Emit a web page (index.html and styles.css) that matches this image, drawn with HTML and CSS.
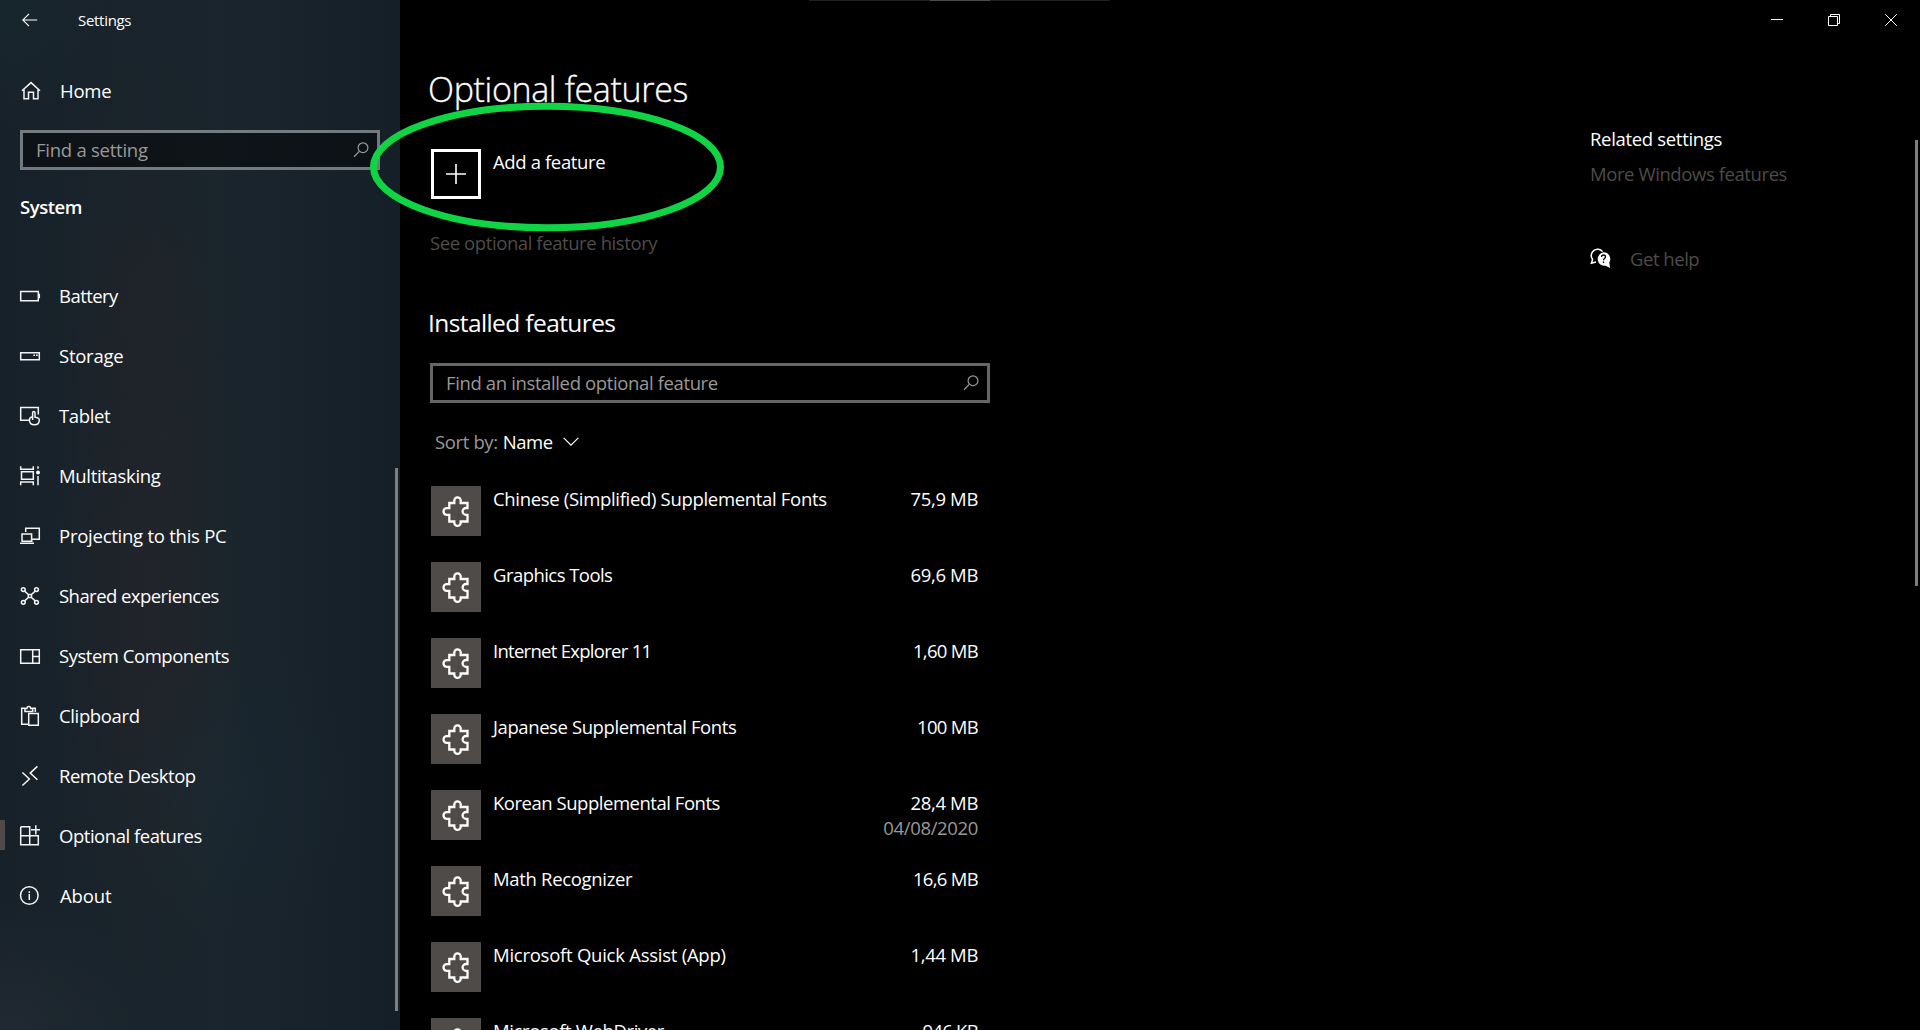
FILE: index.html
```
<!DOCTYPE html>
<html lang="en">
<head>
<meta charset="utf-8">
<title>Settings</title>
<link rel="stylesheet" href="styles.css">
</head>
<body>
<svg class="defs" width="0" height="0" aria-hidden="true">
  <symbol id="puzzle" viewBox="0 0 50 50"><path d="M18.3 17h5v-2.500a3.200 3.200 0 0 1 6.400 0V17H36.500v5h-1.500a3.400 3.400 0 0 0 0 6.800h1.500v6.700h-6.800v1.200a3.200 3.200 0 0 1-6.400 0v-1.200H18.300v-6.700h-2.500a3.300 3.300 0 0 1 0-6.600H18.300z" fill="none" stroke="#fff" stroke-width="2.300"/></symbol>
  <symbol id="magnifier" viewBox="0 0 16 16"><path d="M6.300 9.400 1 14.700" fill="none" stroke="currentColor" stroke-width="1.300"/><circle cx="10" cy="5.700" r="4.900" fill="none" stroke="currentColor" stroke-width="1.200"/></symbol>
</svg>
<div class="window">
  <aside class="sidebar">
    <header class="titlebar">
      <svg class="back" width="16" height="14" viewBox="0 0 16 14"><path d="M15.2 7H1M7 .8.8 7 7 13.2"/></svg>
      <span class="app-name">Settings</span>
    </header>
    <a class="nav-item home"><svg class="icon" viewBox="0 0 20 20"><path d="M2 9.8 11 1.600l9 8.200M4 8.500v9.200h4.500v-6.500h5v6.500H18V8.500"/></svg><span class="tr-25">Home</span></a>
    <div class="search side-search"><span class="tr-25">Find a setting</span><svg class="magnifier"><use href="#magnifier"/></svg></div>
    <h2 class="section tr-45">System</h2>
    <nav class="nav">
      <a class="nav-item"><svg class="icon" viewBox="0 0 20 20"><path d="M.7 5.500h17.600v9.200H.7zM19.300 7.800v4.400"/></svg><span class="tr-55">Battery</span></a>
      <a class="nav-item"><svg class="icon" viewBox="0 0 20 20"><path d="M.7 6.700h18.600v7H.7zM13.300 9.300h1.700M16 9.300h1.700"/></svg><span class="tr-25">Storage</span></a>
      <a class="nav-item"><svg class="icon" viewBox="0 0 20 20"><path d="M9 14.200H.7V1.500h17.600v7M12.600 14V6.900q0-1.400 1.200-1.400T15 6.900v4.300l2.300.5q2 .4 2 2.300 0 4.800-4.700 4.800-5.200 0-5.200-4.800 0-2.800 3.200-3.200"/></svg><span class="tr-35">Tablet</span></a>
      <a class="nav-item"><svg class="icon" viewBox="0 0 20 20"><path d="M.7.2v3h12.600v-3M.7 19.200V16h12.600v3.200M1.500 5.800h11.800v7.400H1.500zM18 .2v2.600M18 10v9.200"/><circle class="solid" cx="18" cy="6.600" r="2"/></svg><span class="tr-30">Multitasking</span></a>
      <a class="nav-item"><svg class="icon" viewBox="0 0 20 20"><path d="M5.700 6V2.300h13.600v11H12M2 15V8h9.600v7M0 17.300h14M1.400 15.200h11.200"/></svg><span class="tr-25">Projecting to this PC</span></a>
      <a class="nav-item"><svg class="icon" viewBox="0 0 20 20"><path d="m4.600 5.100 4 3.600m6.600-3.600-4 3.600m-6.600 6.200 4-3.600m6.600 3.600-4-3.600M8.300 8.500h3.200v3H8.300z"/><circle cx="3.300" cy="3.600" r="1.900"/><circle cx="16.500" cy="3.600" r="1.900"/><circle cx="3.300" cy="16.300" r="1.900"/><circle cx="16.500" cy="16.300" r="1.900"/></svg><span class="tr-55">Shared experiences</span></a>
      <a class="nav-item"><svg class="icon" viewBox="0 0 20 20"><path d="M.7 3.700h18.600v13.600H.7zM12.700 3.700v13.600M12.700 10.500h6.600"/></svg><span class="tr-45">System Components</span></a>
      <a class="nav-item"><svg class="icon" viewBox="0 0 20 20"><path d="M8 18.300H1.700V2.200h3.800M11.800 2.200h3.500V6M4.900 5.500V2.600h2q0-2 1.900-2t1.900 2h2v2.900zM8.700 7.600h9.600v11.700H8.700z"/></svg><span class="tr-35">Clipboard</span></a>
      <a class="nav-item"><svg class="icon" viewBox="0 0 20 20"><path d="m2.400 6.500 7 6.500-7 6.500M17.400.4l-7.200 6.700 7.200 6.700"/></svg><span class="tr-45">Remote Desktop</span></a>
      <a class="nav-item selected"><svg class="icon" viewBox="0 0 20 20"><path d="M.7.7h9v18M.7.7v18h17.600V9.800H.7M15.800-.8v9.400M11 3.800h9"/></svg><span class="tr-45">Optional features</span></a>
      <a class="nav-item about"><svg class="icon" viewBox="0 0 20 20"><circle cx="9.300" cy="9.500" r="8.800"/><path d="M9.300 8v6M9.300 5.200v1.700"/></svg><span class="tr-15">About</span></a>
    </nav>
    <div class="scrollbar side-scroll"></div>
  </aside>
  <main class="content">
    <h1 class="page-title">Optional features</h1>
    <div class="add-row">
      <div class="add-box"><svg width="20" height="20" viewBox="0 0 20 20"><path d="M10 0v20M0 10h20" stroke="#fff" stroke-width="1.600"/></svg></div>
      <span class="tr-35">Add a feature</span>
    </div>
    <a class="history tr-40">See optional feature history</a>
    <h2 class="subtitle">Installed features</h2>
    <div class="search main-search"><span class="tr-35">Find an installed optional feature</span><svg class="magnifier"><use href="#magnifier"/></svg></div>
    <div class="sort"><span class="label tr-35">Sort by:</span><span class="tr-45">Name</span><svg width="16" height="9" viewBox="0 0 16 9"><path d="m.7.8 7.300 7.300L15.300.8" fill="none" stroke="#fff" stroke-width="1.200"/></svg></div>
    <ul class="features">
      <li><svg class="tile"><use href="#puzzle"/></svg><span class="name tr-30">Chinese (Simplified) Supplemental Fonts</span><span class="size">75,9 MB</span></li>
      <li><svg class="tile"><use href="#puzzle"/></svg><span class="name tr-55">Graphics Tools</span><span class="size">69,6 MB</span></li>
      <li><svg class="tile"><use href="#puzzle"/></svg><span class="name tr-70">Internet Explorer 11</span><span class="size narrow">1,60 MB</span></li>
      <li><svg class="tile"><use href="#puzzle"/></svg><span class="name tr-40">Japanese Supplemental Fonts</span><span class="size narrow">100 MB</span></li>
      <li><svg class="tile"><use href="#puzzle"/></svg><span class="name tr-45">Korean Supplemental Fonts</span><span class="size">28,4 MB<br><span class="date">04/08/2020</span></span></li>
      <li><svg class="tile"><use href="#puzzle"/></svg><span class="name tr-30">Math Recognizer</span><span class="size narrow">16,6 MB</span></li>
      <li><svg class="tile"><use href="#puzzle"/></svg><span class="name tr-25">Microsoft Quick Assist (App)</span><span class="size">1,44 MB</span></li>
      <li><svg class="tile"><use href="#puzzle"/></svg><span class="name tr-35">Microsoft WebDriver</span><span class="size narrow">946 KB</span></li>
    </ul>
  </main>
  <aside class="related">
    <div class="controls">
      <svg width="12" height="12" viewBox="0 0 12 12"><path d="M0 5.500h12"/></svg>
      <svg width="12" height="12" viewBox="0 0 12 12"><path d="M.5 2.500h9v9h-9zM2.500 2.500v-2h9v9h-2"/></svg>
      <svg width="12" height="12" viewBox="0 0 12 12"><path d="m.2.2 11.600 11.600M11.800.2.2 11.800"/></svg>
    </div>
    <h3 class="related-title tr-30">Related settings</h3>
    <a class="link tr-40">More Windows features</a>
    <a class="link help"><svg width="21" height="21" viewBox="0 0 21 21"><path d="M12.600 3.600A6.300 6.300 0 1 0 2.600 11.500L1.400 15.200 6 14" fill="none" stroke="#fff" stroke-width="1.500"/><path d="M13.500 4.200a6.800 6.800 0 0 1 5.800 10.300l.8 5.400-4.600-2.200A6.800 6.800 0 1 1 13.500 4.200z" fill="#fff"/><path d="M11.500 9q0-2 2-2t2 1.800q0 1-1 1.700-.9.700-.9 1.700M13.500 13.500v1.400" fill="none" stroke="#000" stroke-width="1.300"/></svg><span class="tr-45">Get help</span></a>
    <div class="scrollbar main-scroll"></div>
  </aside>
  <div class="top-grip"><i></i></div>
  <svg class="highlight" width="354" height="129" viewBox="0 0 354 129"><ellipse cx="177" cy="65" rx="173.500" ry="60.800"/></svg>
</div>
</body>
</html>
```

FILE: styles.css
```
* { box-sizing: border-box; }
body {
  margin: 0;
  overflow: hidden;
  background: #000;
  color: #fff;
  font: 18.5px/25px "Open Sans", "Noto Sans", sans-serif;
}
h1, h2, h3, ul { margin: 0; padding: 0; font-weight: 400; }
svg { display: block; flex: none; overflow: visible; }
.defs { position: absolute; }
.tr-15 { letter-spacing: -0.15px; }
.tr-25 { letter-spacing: -0.25px; }
.tr-30 { letter-spacing: -0.32px; }
.tr-35 { letter-spacing: -0.37px; }
.tr-40 { letter-spacing: -0.41px; }
.tr-45 { letter-spacing: -0.47px; }
.tr-55 { letter-spacing: -0.55px; }
.tr-70 { letter-spacing: -0.72px; }

.window {
  position: relative;
  display: flex;
  width: 1920px;
  height: 1030px;
  overflow: hidden;
}

/* Sidebar */
.sidebar {
  position: relative;
  flex: none;
  width: 400px;
  background:
    radial-gradient(ellipse 100px 400px at 150px 600px, rgba(58, 38, 34, .26), transparent),
    radial-gradient(ellipse 100px 240px at 140px 280px, rgba(48, 36, 38, .22), transparent),
    radial-gradient(ellipse 130px 160px at 225px 790px, rgba(28, 48, 60, .25), transparent),
    radial-gradient(ellipse 110px 130px at 0 0, rgba(24, 44, 50, .5), transparent),
    radial-gradient(ellipse 160px 130px at 0 1030px, rgba(46, 54, 60, .4), transparent),
    linear-gradient(90deg, #17212a, #1a252d 55%, #151f28);
}
.titlebar {
  display: flex;
  align-items: center;
  height: 40px;
  padding-left: 22px;
  font-size: 15px;
}
.back { fill: none; stroke: #fff; stroke-width: 1.1; }
.app-name { margin-left: 40px; letter-spacing: -0.3px; }
.nav-item {
  position: relative;
  display: flex;
  align-items: center;
  height: 60px;
  padding-left: 20px;
}
.nav-item span { margin-left: 19px; padding-bottom: 2px; }
.home { margin-top: 21px; }
.home span, .about span { margin-left: 20px; }
.icon {
  width: 20px;
  height: 20px;
  fill: none;
  stroke: #f4f4f4;
  stroke-width: 1.5;
}
.icon .solid { fill: #fff; stroke: none; }
.search {
  display: flex;
  align-items: center;
  justify-content: space-between;
  height: 40px;
  border: 3px solid #666;
  color: #999;
}
.search span { padding-bottom: 2px; }
.side-search {
  margin: 9px 20px 0;
  padding: 0 8px 0 13px;
  border-color: rgba(255, 255, 255, .4);
  background: rgba(0, 0, 0, .45);
  background-clip: padding-box;
}
.magnifier { width: 16px; height: 16px; }
.section {
  margin: 24px 0 0 20px;
  font-size: 18.5px;
  font-weight: 600;
}
.nav { margin-top: 47px; }
.selected::before {
  content: "";
  position: absolute;
  left: 0;
  top: 14px;
  width: 5px;
  height: 30px;
  background: #4f4b48;
}
.scrollbar {
  position: absolute;
  width: 3px;
  background: #7d7f81;
}
.side-scroll { left: 395px; top: 468px; height: 543px; }
.main-scroll { right: 2px; top: 140px; height: 446px; }

/* Page content */
.content { width: 590px; padding: 64px 0 0 30px; }
.page-title {
  margin-left: -2px;
  font-size: 34px;
  font-weight: 300;
  line-height: 50px;
  letter-spacing: -0.35px;
  -webkit-text-stroke: 0.35px #fff;
}
.add-row { display: flex; gap: 12px; margin-top: 35px; padding-left: 1px; }
.add-box {
  display: flex;
  align-items: center;
  justify-content: center;
  width: 50px;
  height: 50px;
  border: 3px solid #fff;
}
.history { display: block; margin: 31px 0 0; color: #4f4b49; }
.subtitle {
  margin: 51px 0 0 -2px;
  font-size: 24.5px;
  line-height: 34px;
  letter-spacing: -0.6px;
}
.main-search { margin-top: 23px; padding: 0 8px 0 13px; }
.sort { display: flex; align-items: center; margin: 26px 0 0 5px; }
.sort .label { margin-right: 5px; color: #999; }
.sort svg { margin-left: 10px; }
.features { list-style: none; margin-top: 32px; }
.features li {
  display: flex;
  align-items: flex-start;
  height: 76px;
  padding: 0 12px 0 1px;
}
.tile { width: 50px; height: 50px; background: #4f4b48; }
.name { flex: 1; margin-left: 12px; }
.size { text-align: right; letter-spacing: -0.35px; }
.narrow { letter-spacing: -0.7px; }

.date { color: #999; }

/* Right column */
.related { position: relative; flex: 1; padding-left: 600px; }
.controls {
  display: flex;
  justify-content: flex-end;
  gap: 45px;
  height: 126px;
  padding: 14px 23px 0 0;
}
.controls svg { fill: none; stroke: #fff; stroke-width: 1; }
.related-title { font-size: 18.5px; }
.link { display: block; margin-top: 10px; color: #4f4b49; }
.help { display: flex; align-items: center; gap: 19px; margin-top: 60px; }

/* Overlays */
.top-grip {
  position: absolute;
  top: 0;
  left: 809px;
  display: flex;
  justify-content: center;
  width: 301px;
  height: 1px;
  background: #202020;
}
.top-grip i { width: 60px; background: #4a4a4a; }
.highlight { position: absolute; left: 370px; top: 102px; }
.highlight ellipse { fill: none; stroke: #11d445; stroke-width: 7; }
```
